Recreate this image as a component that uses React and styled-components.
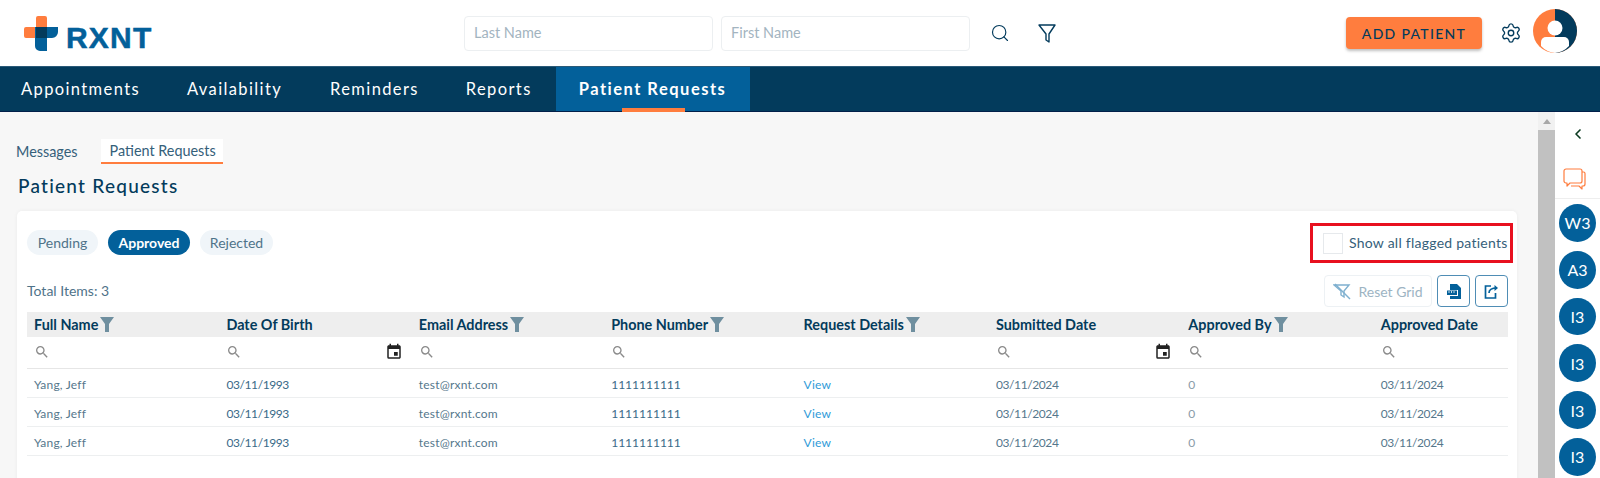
import styled, { createGlobalStyle } from "styled-components";
import { ChevronLeft, Search, Settings } from "lucide-react";
import { MdEvent, MdSearch } from "react-icons/md";

const navy = "#033b5c";
const blue = "#03609a";
const orange = "#ff7d3e";

const GlobalStyle = createGlobalStyle`
  html, body {
    margin: 0;
    padding: 0;
    background: #fff;
    font-family: "Lato", "Open Sans", sans-serif;
    color: ${navy};
  }
  * { box-sizing: border-box; }
`;

const Page = styled.div`
  width: 1600px;
  height: 478px;
  overflow: hidden;
  display: flex;
  flex-direction: column;
`;

// top header
const Header = styled.header`
  height: 66px;
  flex: none;
  background: #fff;
  display: flex;
  align-items: flex-start;
`;

const Logo = styled.div`
  width: 464px;
  flex: none;
  padding: 16px 0 0 24px;
  display: flex;
  gap: 8px;
`;

const LogoText = styled.span`
  font-family: "Liberation Sans", sans-serif;
  font-weight: 700;
  font-size: 30px;
  line-height: 34px;
  margin-top: 5px;
  letter-spacing: 1.2px;
  -webkit-text-stroke: 0.5px ${blue};
  color: ${blue};
`;

const NameInput = styled.div`
  width: 249px;
  height: 35px;
  margin-top: 16px;
  margin-right: 8px;
  padding: 0 0 2px 9px;
  border: 1px solid #eceff1;
  border-radius: 4px;
  display: flex;
  align-items: center;
  font-size: 14.5px;
  color: #a3b4bf;
`;

const HeaderIcon = styled.div`
  margin-top: ${(p) => p.mt || "24px"};
  margin-left: ${(p) => p.ml || "0"};
  margin-right: ${(p) => p.mr || "0"};
  display: flex;
  color: ${navy};
`;

const AddButton = styled.button`
  width: 136px;
  height: 32px;
  margin: 17px 0 0 290px;
  border: 0;
  border-radius: 4px;
  background: ${orange};
  box-shadow: 0 2px 3px rgba(0, 0, 0, 0.25);
  font-family: inherit;
  font-size: 14px;
  font-weight: 500;
  letter-spacing: 1.3px;
  color: ${navy};
  padding: 0;
`;

const Avatar = styled.div`
  width: 44px;
  height: 44px;
  margin: 9px 0 0 11px;
  display: flex;
`;

// nav bar
const Nav = styled.nav`
  height: 46px;
  flex: none;
  background: ${navy};
  border-top: 1px solid #2a5a78;
  border-bottom: 1px solid #02204a;
  display: flex;
  padding-left: 21px;
`;

const NavItem = styled.div`
  position: relative;
  height: 100%;
  display: flex;
  align-items: center;
  color: #fff;
  font-size: 16.5px;
  letter-spacing: ${(p) => (p.$active ? "1.5px" : "1.38px")};
  font-weight: ${(p) => (p.$active ? 700 : 400)};
  margin-right: ${(p) => p.mr || "0"};
  padding: ${(p) => (p.$active ? "0 24px 1px 23px" : "0 0 1px")};
  background: ${(p) => (p.$active ? blue : "transparent")};

  ${(p) =>
    p.$active &&
    `&::after {
      content: "";
      position: absolute;
      left: 66px;
      bottom: -1px;
      width: 63px;
      height: 4px;
      background: ${orange};
    }`}
`;

// body
const Body = styled.div`
  flex: 1;
  min-height: 0;
  display: flex;
`;

const Content = styled.main`
  width: 1538px;
  flex: none;
  background: #f7f7f7;
  padding: 27px 0 0 17px;
`;

const SubTabs = styled.div`
  height: 25px;
  margin-left: -1px;
  display: flex;
  align-items: stretch;
`;

const SubTab = styled.div`
  display: flex;
  align-items: center;
  font-size: 14.4px;
  color: #35607a;
  padding: ${(p) => (p.$active ? "0 7px 0 9px" : "0")};
  margin-left: ${(p) => (p.$active ? "23px" : "0")};
  background: ${(p) => (p.$active ? "#fff" : "transparent")};
  border-bottom: ${(p) => (p.$active ? `2px solid ${orange}` : "0")};
`;

const Title = styled.h1`
  margin: 10px 0 0 1px;
  height: 26px;
  font-size: 19px;
  line-height: 24px;
  font-weight: 500;
  letter-spacing: 1.25px;
  color: ${navy};
`;

const Card = styled.section`
  width: 1500px;
  height: 300px;
  margin-top: 11px;
  padding: 12px 9px 0 10px;
  background: #fff;
  border-radius: 5px;
  box-shadow: 0 0 4px rgba(0, 0, 0, 0.05);
`;

const StatusRow = styled.div`
  display: flex;
  align-items: center;
  justify-content: space-between;
`;

const Pills = styled.div`
  display: flex;
  gap: 10px;
  margin-bottom: 2px;
`;

const Pill = styled.div`
  width: ${(p) => p.w};
  height: 25px;
  border-radius: 13px;
  display: flex;
  align-items: center;
  justify-content: center;
  font-size: 14px;
  font-weight: ${(p) => (p.$active ? 700 : 400)};
  color: ${(p) => (p.$active ? "#fff" : "#4f7389")};
  background: ${(p) => (p.$active ? blue : "#f0f5f9")};
`;

const FlagBox = styled.label`
  width: 203px;
  height: 40px;
  margin-right: -5px;
  border: 3px solid #e8101f;
  padding-left: 10px;
  display: flex;
  align-items: center;
  gap: 6px;
  font-size: 14px;
  letter-spacing: 0.25px;
  color: #35607a;
`;

const FlagLabel = styled.span`
  margin-bottom: 2px;
`;

const CheckBox = styled.span`
  width: 20px;
  height: 21px;
  border: 1px solid #e6e9ec;
  flex: none;
`;

const ToolRow = styled.div`
  height: 32px;
  margin-top: 12px;
  display: flex;
  align-items: center;
`;

const TotalItems = styled.div`
  flex: 1;
  font-size: 14px;
  margin-bottom: 2px;
  color: #4f7389;
`;

const ResetButton = styled.div`
  width: 108px;
  height: 32px;
  margin-right: 5px;
  border: 1px solid #edf1f4;
  border-radius: 4px;
  display: flex;
  align-items: center;
  justify-content: center;
  gap: 6px;
  font-size: 14px;
  color: #9db4c3;
`;

const IconButton = styled.div`
  width: 33px;
  height: 32px;
  margin-left: ${(p) => p.ml || "0"};
  border: 1px solid #4f8db5;
  border-radius: 4px;
  display: flex;
  align-items: center;
  justify-content: center;
`;

const Table = styled.div`
  margin-top: 5px;
  width: 1481px;
`;

const TableRow = styled.div`
  display: grid;
  grid-template-columns: repeat(7, 192.4px) 1fr;
  height: ${(p) => p.h || "29px"};
  align-items: center;
  background: ${(p) => p.bg || "#fff"};
  border-bottom: ${(p) => p.line || "1px solid #edeff0"};
`;

const HeadCell = styled.div`
  padding-left: 7px;
  display: flex;
  align-items: center;
  gap: 2px;
  font-size: 14.4px;
  font-weight: 700;
  color: ${navy};
`;

const FilterCell = styled.div`
  padding: 0 9px 2px 7px;
  display: flex;
  align-items: center;
  justify-content: space-between;
  color: #8a8a8a;
`;

const Cell = styled.div`
  padding: 2px 0 0 7px;
  font-size: 12px;
  letter-spacing: ${(p) => (p.$date ? "-0.4px" : p.$tight ? "0" : "0.2px")};
  color: ${(p) => p.color || "#55778c"};
`;

// right side
const ScrollBar = styled.div`
  width: 17px;
  flex: none;
  background: #f1f1f1;
  display: flex;
  flex-direction: column;
  align-items: center;
`;

const ScrollArrow = styled.div`
  height: 18px;
  padding-top: 7px;
  flex: none;
  &::before {
    content: "";
    display: block;
    border-left: 4px solid transparent;
    border-right: 4px solid transparent;
    border-bottom: 5px solid #a8a8a8;
  }
`;

const ScrollThumb = styled.div`
  width: 100%;
  flex: 1;
  background: #c1c1c1;
`;

const SideBar = styled.aside`
  width: 45px;
  flex: none;
  background: #fff;
  display: flex;
  flex-direction: column;
  align-items: center;
`;

const Collapse = styled.div`
  height: 56px;
  padding-top: 14px;
  display: flex;
  justify-content: center;
  color: #0b3a20;
`;

const ChatTab = styled.div`
  width: 100%;
  height: 31px;
  padding-right: 6px;
  border-bottom: 1px solid #eeeeee;
  display: flex;
  justify-content: center;
`;

const Bubbles = styled.div`
  display: flex;
  flex-direction: column;
  gap: 9px;
  padding-top: 5px;
`;

const Bubble = styled.div`
  width: 37px;
  height: 37.8px;
  border-radius: 50%;
  background: ${blue};
  color: #fff;
  display: flex;
  align-items: center;
  justify-content: center;
  font-size: 16px;
`;

function LogoMark() {
  return (
    <svg width="34" height="35" viewBox="0 0 34 35">
      <path d="M14 0h7a2 2 0 0 1 2 2v20H2a2 2 0 0 1-2-2v-7a2 2 0 0 1 2-2h10V2a2 2 0 0 1 2-2z" fill={orange} />
      <path d="M11 11h23v5a6 6 0 0 1-6 6h-5v13h-7a5 5 0 0 1-5-5z" fill={blue} />
      <rect x="12" y="11" width="11" height="11" fill={navy} />
    </svg>
  );
}

function AvatarIcon() {
  return (
    <svg width="44" height="44" viewBox="0 0 44 44">
      <circle cx="22" cy="22" r="22" fill={orange} />
      <path d="M22 0a22 22 0 0 1 0 44z" fill={navy} />
      <circle cx="22" cy="19" r="7.5" fill="#fff" />
      <path d="M8 37v-4a5 5 0 0 1 5-5h18a5 5 0 0 1 5 5v4a22 22 0 0 1-14 7 22 22 0 0 1-14-7z" fill="#fff" />
    </svg>
  );
}

function FunnelOutline() {
  return (
    <svg width="18" height="19" viewBox="0 0 18 19" fill="none" stroke={navy} strokeWidth="1.4" strokeLinejoin="round">
      <path d="M1 1h16l-6 9v8l-3-2v-6z" />
    </svg>
  );
}

function Funnel() {
  return (
    <svg width="14" height="15" viewBox="0 0 14 15">
      <path d="M0 0h14L9 7v8H5V7z" fill="#6f8f9f" />
    </svg>
  );
}

function ChatIcon() {
  return (
    <svg width="23" height="22" viewBox="0 0 23 22" fill="none" stroke={orange} strokeWidth="1.2" strokeLinejoin="round">
      <path d="M3 1h14a2 2 0 0 1 2 2v10a2 2 0 0 1-2 2H7l-3 3v-3H3a2 2 0 0 1-2-2V3a2 2 0 0 1 2-2z" />
      <path d="M19 4h1.5A1.5 1.5 0 0 1 22 5.500V16a2 2 0 0 1-2 2h-1v3l-3-3H8" />
    </svg>
  );
}

function ResetIcon() {
  return (
    <svg width="19" height="17" viewBox="0 0 19 17" fill="none" stroke="#7fb0cf" strokeWidth="1.4">
      <path d="M1 2h15l-5 6v6l-3-2V8z" />
      <path d="M2 1l15 15" />
    </svg>
  );
}

function PdfIcon() {
  return (
    <svg width="14" height="15" viewBox="0 0 14 15">
      <path d="M3 0h7l4 4v11H3v-3h8V6H3z" fill={blue} />
      <rect x="0" y="6.500" width="10" height="4.500" fill={blue} />
      <path d="M1.500 8h1M4 8h1M6.500 8h1" stroke="#fff" strokeWidth="1.500" />
    </svg>
  );
}

function ExportIcon() {
  return (
    <svg width="15" height="15" viewBox="0 0 15 15" fill="none" stroke={blue} strokeWidth="1.700">
      <path d="M7 2H1.500v12h10V9" />
      <path d="M5 9c0-3 2-5 8-5" />
      <path d="M10.500 1 14 4l-3.500 3" fill={blue} stroke="none" />
    </svg>
  );
}

const columns = [
  { name: "Full Name", funnel: true, search: true },
  { name: "Date Of Birth", search: true, calendar: true },
  { name: "Email Address", funnel: true, search: true },
  { name: "Phone Number", funnel: true, search: true },
  { name: "Request Details", funnel: true },
  { name: "Submitted Date", search: true, calendar: true },
  { name: "Approved By", funnel: true, search: true },
  { name: "Approved Date", search: true },
];

const rows = [1, 2, 3];
const bubbles = ["W3", "A3", "I3", "I3", "I3", "I3"];

export default function App() {
  return (
    <Page>
      <GlobalStyle />
      <Header>
        <Logo>
          <LogoMark />
          <LogoText>RXNT</LogoText>
        </Logo>
        <NameInput>Last Name</NameInput>
        <NameInput>First Name</NameInput>
        <HeaderIcon ml="12px" mr="1px" mt="23px">
          <Search size={20} strokeWidth={1.4} />
        </HeaderIcon>
        <HeaderIcon ml="27px">
          <FunnelOutline />
        </HeaderIcon>
        <AddButton>ADD PATIENT</AddButton>
        <HeaderIcon ml="18px" mt="22px">
          <Settings size={22} strokeWidth={1.5} />
        </HeaderIcon>
        <Avatar>
          <AvatarIcon />
        </Avatar>
      </Header>

      <Nav>
        <NavItem mr="47px">Appointments</NavItem>
        <NavItem mr="48px">Availability</NavItem>
        <NavItem mr="47px">Reminders</NavItem>
        <NavItem mr="24px">Reports</NavItem>
        <NavItem $active>Patient Requests</NavItem>
      </Nav>

      <Body>
        <Content>
          <SubTabs>
            <SubTab>Messages</SubTab>
            <SubTab $active>Patient Requests</SubTab>
          </SubTabs>
          <Title>Patient Requests</Title>
          <Card>
            <StatusRow>
              <Pills>
                <Pill w="71px">Pending</Pill>
                <Pill w="82px" $active>Approved</Pill>
                <Pill w="73px">Rejected</Pill>
              </Pills>
              <FlagBox>
                <CheckBox />
                <FlagLabel>Show all flagged patients</FlagLabel>
              </FlagBox>
            </StatusRow>
            <ToolRow>
              <TotalItems>Total Items: 3</TotalItems>
              <ResetButton>
                <ResetIcon />
                Reset Grid
              </ResetButton>
              <IconButton>
                <PdfIcon />
              </IconButton>
              <IconButton ml="5px">
                <ExportIcon />
              </IconButton>
            </ToolRow>
            <Table>
              <TableRow h="25px" bg="#eeeeee" line="0">
                {columns.map((c) => (
                  <HeadCell key={c.name}>
                    {c.name}
                    {c.funnel && <Funnel />}
                  </HeadCell>
                ))}
              </TableRow>
              <TableRow h="32px" line="1px solid #e6e6e6">
                {columns.map((c) => (
                  <FilterCell key={c.name}>
                    {c.search && <MdSearch size={16} />}
                    {c.calendar && <MdEvent size={18} color="#222" />}
                  </FilterCell>
                ))}
              </TableRow>
              {rows.map((r) => (
                <TableRow key={r}>
                  <Cell>Yang, Jeff</Cell>
                  <Cell $date color="#3a6a88">03/11/1993</Cell>
                  <Cell>test@rxnt.com</Cell>
                  <Cell $tight color="#3a6a88">1111111111</Cell>
                  <Cell color="#2f9bd8">View</Cell>
                  <Cell $date>03/11/2024</Cell>
                  <Cell color="#8a9ba8">0</Cell>
                  <Cell $date>03/11/2024</Cell>
                </TableRow>
              ))}
            </Table>
          </Card>
        </Content>

        <ScrollBar>
          <ScrollArrow />
          <ScrollThumb />
        </ScrollBar>

        <SideBar>
          <Collapse>
            <ChevronLeft size={16} strokeWidth={2.5} />
          </Collapse>
          <ChatTab>
            <ChatIcon />
          </ChatTab>
          <Bubbles>
            {bubbles.map((b, i) => (
              <Bubble key={i}>{b}</Bubble>
            ))}
          </Bubbles>
        </SideBar>
      </Body>
    </Page>
  );
}
